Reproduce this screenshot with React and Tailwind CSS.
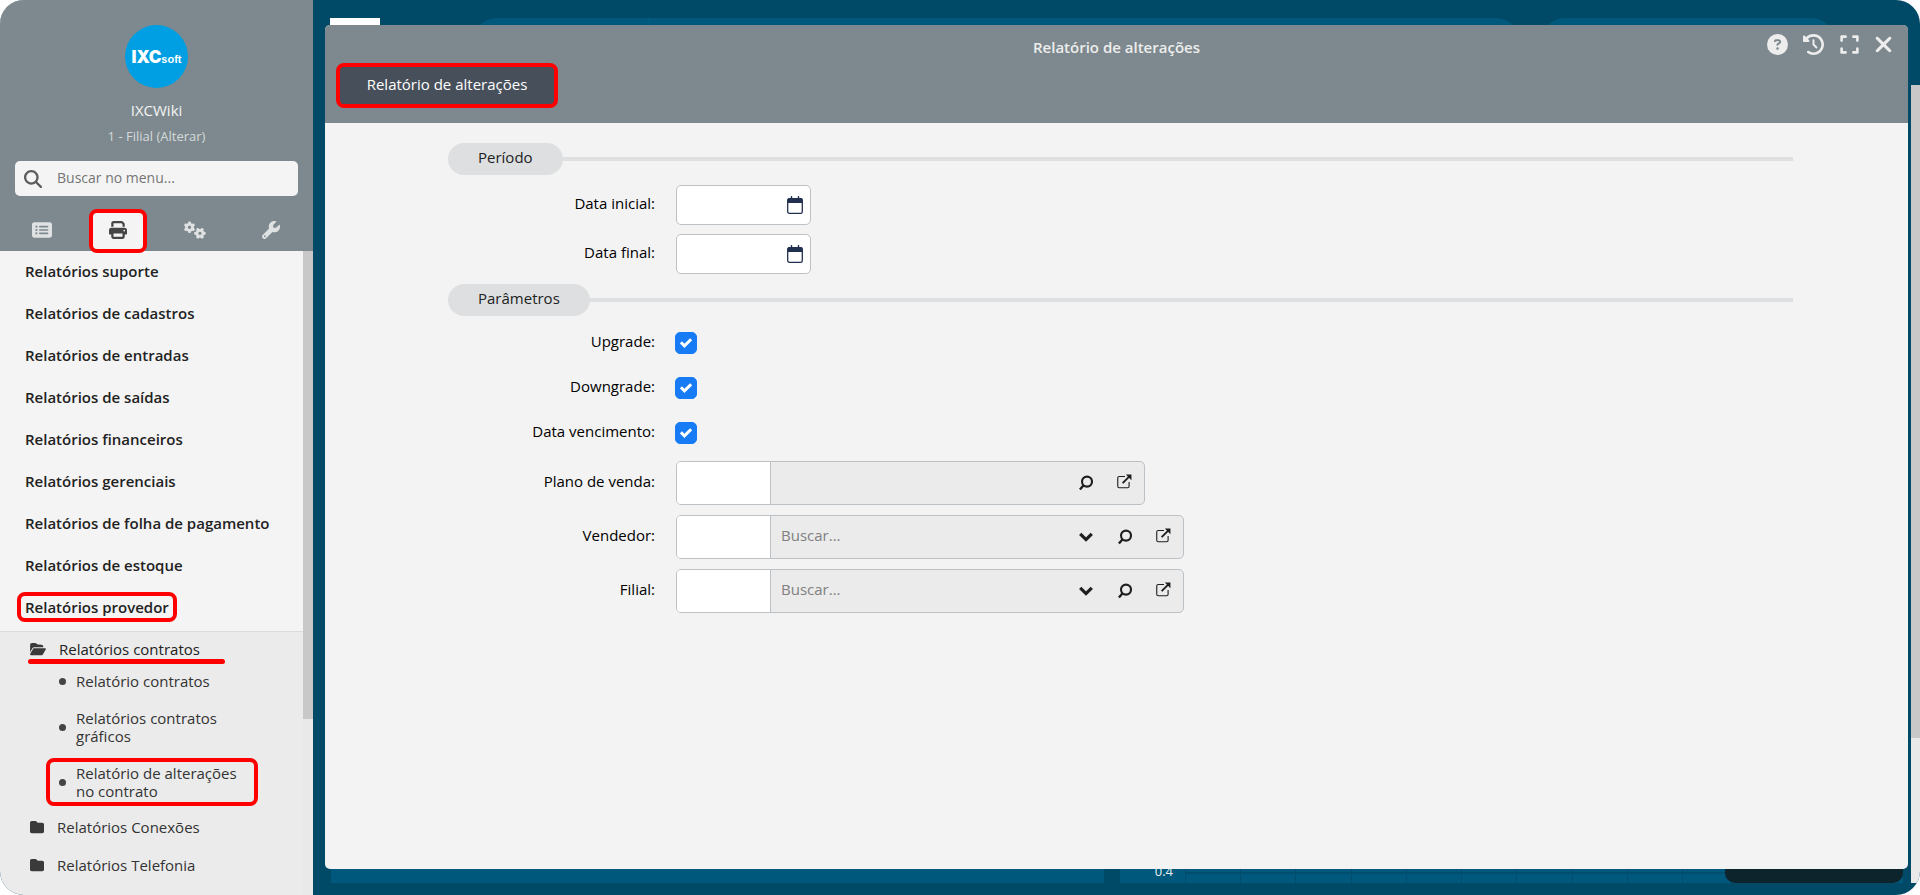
import { useState } from 'react';
import {
  FaCircleQuestion,
  FaClockRotateLeft,
  FaExpand,
  FaFolder,
  FaFolderOpen,
  FaGears,
  FaMagnifyingGlass,
  FaPrint,
  FaRectangleList,
  FaWrench,
  FaXmark,
} from 'react-icons/fa6';

const MENU_ITEMS = [
  'Relatórios suporte',
  'Relatórios de cadastros',
  'Relatórios de entradas',
  'Relatórios de saídas',
  'Relatórios financeiros',
  'Relatórios gerenciais',
  'Relatórios de folha de pagamento',
  'Relatórios de estoque',
  'Relatórios provedor',
];

const TABS = [
  { id: 'cadastros', label: 'Cadastros', icon: FaRectangleList },
  { id: 'relatorios', label: 'Relatórios', icon: FaPrint },
  { id: 'configuracoes', label: 'Configurações', icon: FaGears },
  { id: 'ferramentas', label: 'Ferramentas', icon: FaWrench },
];

const CalendarIcon = () => (
  <svg className="w-4 h-[18px]" viewBox="0 0 16 18" fill="none" aria-hidden="true">
    <path d="M4.5 0.6v3M11.5 0.6v3" stroke="#22304f" strokeWidth="1.4" strokeLinecap="round" />
    <rect x="0.7" y="2.7" width="14.6" height="14.6" rx="1.6" stroke="#22304f" strokeWidth="1.3" />
    <path d="M0.5 3.8C0.5 2.9 1.2 2.2 2 2.2h12c0.9 0 1.5 0.7 1.5 1.6V7h-15z" fill="#22304f" />
  </svg>
);

const ExternalIcon = () => (
  <svg className="w-[15px] h-[15px]" viewBox="0 0 16 16" fill="none" aria-hidden="true">
    <path d="M8.5 2.6H2.4C1.5 2.6 0.8 3.3 0.8 4.2v8.9c0 0.9 0.7 1.6 1.6 1.6h8.9c0.9 0 1.6-0.7 1.6-1.6V8.5" stroke="#1f1f1f" strokeWidth="1.2" />
    <path d="M6 9.8L13 2.8" stroke="#1f1f1f" strokeWidth="2" />
    <path d="M9.4 0.6h6v6z" fill="#1f1f1f" />
  </svg>
);

const Sidebar = () => {
  const [activeTab, setActiveTab] = useState('relatorios');

  return (
    <aside className="w-[313px] shrink-0 flex flex-col bg-[#ebebeb]">
      <div className="h-[251px] flex flex-col items-center bg-[#7d898e] pt-[25px]">
        <div className="w-[63px] h-[63px] rounded-full bg-[#009fe3] text-white flex items-baseline justify-center pt-5 leading-6">
          <span className="font-['Inter',sans-serif] font-black text-[17px]">IXC</span>
          <span className="font-['Liberation_Sans',sans-serif] font-bold text-[11px]">soft</span>
        </div>
        <p className="mt-3 text-[15px] leading-5 font-medium text-[#f4f4f4]">IXCWiki</p>
        <a href="#filial" className="mt-1.5 text-[13px] leading-5 text-[#d5d9db]">1 - Filial (Alterar)</a>
        <label className="mt-[15px] w-[283px] h-[35px] flex items-center rounded-[5px] bg-[#f4f4f4]">
          <FaMagnifyingGlass className="ml-[9px] mr-[15px] w-[18px] h-[18px] text-[#5c5c5c]" />
          <input
            type="text"
            aria-label="Buscar no menu"
            placeholder="Buscar no menu..."
            className="flex-1 min-w-0 pb-0.5 bg-transparent text-sm placeholder:text-[#757575] outline-none"
          />
        </label>
        <div className="mt-[13px] w-full px-1 flex-1 grid grid-cols-4">
          {TABS.map(({ id, label, icon: Icon }) => (
            <button
              key={id}
              aria-label={label}
              onClick={() => setActiveTab(id)}
              className={`relative flex justify-center items-center pb-px ${activeTab === id ? 'text-[#454545]' : 'text-[#dfe1e2]'}`}
            >
              {activeTab === id && (
                <span className="absolute left-[9px] top-0 w-[58px] h-11 rounded-lg border-4 border-[#ff0000] bg-[#f4f4f4]" />
              )}
              <Icon className={`relative ${id === 'configuracoes' ? 'w-[22px] h-[22px]' : id === 'cadastros' ? 'w-5 h-5' : 'w-[18px] h-[18px]'}`} />
            </button>
          ))}
        </div>
      </div>

      <div className="flex-1 flex">
        <nav className="flex-1 min-w-0">
          <ul className="bg-[#f4f4f4] border-b border-[#dadcde] pb-0.5 text-[15px] leading-5 font-semibold text-[#222]">
            {MENU_ITEMS.map((item) => (
              <li key={item} className="h-[42px] pl-[25px] pb-0.5 flex items-center">
                <a href="#menu" className="relative">
                  {item}
                  {item === 'Relatórios provedor' && (
                    <span className="absolute -left-2 -inset-y-[5px] w-[160px] rounded-lg border-4 border-[#ff0000]" />
                  )}
                </a>
              </li>
            ))}
          </ul>

          <div className="pt-[7px] text-[15px] text-[#333]">
            <a href="#contratos" className="relative flex items-center pl-[30px] leading-5 font-medium text-[#222]">
              <FaFolderOpen className="w-4 h-3.5 mr-[13px] text-[#3a3a3a]" />
              Relatórios contratos
              <span className="absolute left-7 top-5 w-[197px] h-[5px] rounded-full bg-[#ff0000]" />
            </a>
            <ul className="mt-[13px] flex flex-col gap-[19px] leading-[18px]">
              <li className="flex items-center pl-[59px]">
                <span className="w-[7px] h-[7px] mr-2.5 rounded-full bg-[#444]" />
                <a href="#relatorio-contratos">Relatório contratos</a>
              </li>
              <li className="flex items-center pl-[59px]">
                <span className="w-[7px] h-[7px] mr-2.5 rounded-full bg-[#444]" />
                <a href="#contratos-graficos">Relatórios contratos<br />gráficos</a>
              </li>
              <li className="relative flex items-center pl-[59px]">
                <span className="w-[7px] h-[7px] mr-2.5 rounded-full bg-[#444]" />
                <a href="#alteracoes">Relatório de alterações<br />no contrato</a>
                <span className="absolute left-[46px] -inset-y-1.5 w-[212px] rounded-lg border-4 border-[#ff0000]" />
              </li>
            </ul>
            <ul className="mt-[17px] flex flex-col gap-[18px] leading-5">
              <li>
                <a href="#conexoes" className="flex items-center pl-[30px]">
                  <FaFolder className="w-3.5 h-3.5 mr-[13px] text-[#3a3a3a]" />
                  Relatórios Conexões
                </a>
              </li>
              <li>
                <a href="#telefonia" className="flex items-center pl-[30px]">
                  <FaFolder className="w-3.5 h-3.5 mr-[13px] text-[#3a3a3a]" />
                  Relatórios Telefonia
                </a>
              </li>
            </ul>
          </div>
        </nav>
        <div className="w-2.5 bg-[#e9e9e9]">
          <div className="h-[468px] bg-[#c8c8c8]" />
        </div>
      </div>
    </aside>
  );
};

const Section = ({ title, children }) => (
  <section>
    <div className="flex items-center">
      <h2 className="h-8 px-[30px] rounded-full bg-[#dddfe1] text-[15px] leading-[29px] font-medium text-[#222]">{title}</h2>
      <div className="flex-1 h-1 bg-[#dddfe1]" />
    </div>
    {children}
  </section>
);

const Row = ({ id, label, children }) => (
  <div className="flex items-center gap-[21px]">
    <label htmlFor={id} className="w-[207px] shrink-0 pb-1 text-right text-[15px] leading-[18px] text-black">{label}</label>
    {children}
  </div>
);

const DateField = ({ id, label }) => (
  <Row id={id} label={label}>
    <div className="w-[135px] h-10 flex items-center rounded-[5px] border border-[#bcc1c6] bg-white">
      <input id={id} type="text" className="flex-1 min-w-0 px-2 text-sm bg-transparent outline-none" />
      <button aria-label={`Abrir calendário ${label}`} className="pr-[7px]">
        <CalendarIcon />
      </button>
    </div>
  </Row>
);

const CheckField = ({ id, label }) => (
  <Row id={id} label={label}>
    <span className="grid -ml-px">
      <input
        id={id}
        type="checkbox"
        defaultChecked
        className="peer col-start-1 row-start-1 appearance-none w-[22px] h-[22px] rounded-[5px] border border-[#bcc1c6] bg-white checked:border-[#167bf5] checked:bg-[#167bf5]"
      />
      <svg className="hidden peer-checked:block col-start-1 row-start-1 place-self-center w-3 h-3 pointer-events-none" viewBox="0 0 12 12" fill="none" aria-hidden="true">
        <path d="M0.9 5.4l3.5 3.5L11.1 2.2" stroke="#fff" strokeWidth="3" />
      </svg>
    </span>
  </Row>
);

const LookupField = ({ id, label, searchable }) => (
  <Row id={id} label={label}>
    <div className={`h-11 flex rounded-[5px] border border-[#bcc1c6] bg-[#ebebeb] overflow-hidden ${searchable ? 'w-[508px]' : 'w-[469px]'}`}>
      <input id={id} type="text" className="w-[94px] px-2 text-sm bg-white border-r border-[#bcc1c6] outline-none" />
      <input
        type="text"
        aria-label={`${label} descrição`}
        placeholder={searchable ? 'Buscar...' : ''}
        className="flex-1 min-w-0 px-2.5 pb-1 text-[15px] bg-transparent placeholder:text-[#808080] outline-none"
      />
      {searchable && (
        <button aria-label="Listar" className="w-[39px] flex items-center justify-center text-[#1f1f1f]">
          <svg className="w-3.5 h-2.5" viewBox="0 0 14 10" fill="none" stroke="currentColor" aria-hidden="true">
            <path d="M1.2 1.8L7 7.6l5.8-5.8" strokeWidth="3.2" />
          </svg>
        </button>
      )}
      <button aria-label="Pesquisar" className="w-[39px] flex items-center justify-center text-[#1f1f1f]">
        <svg className="w-3.5 h-4" viewBox="0 0 14 16" fill="none" stroke="currentColor" aria-hidden="true">
          <circle cx="8" cy="6.6" r="5" strokeWidth="2.1" />
          <path d="M4.4 10.4L0.9 14.6" strokeWidth="2.3" />
        </svg>
      </button>
      <button aria-label="Abrir cadastro" className="w-[39px] flex items-center justify-center pb-1">
        <ExternalIcon />
      </button>
    </div>
  </Row>
);

// Home screen that stays visible around the edges of the report window
const Dashboard = () => (
  <div className="flex-1 min-w-0 flex flex-col justify-between pt-[18px] pb-3 pl-[17px] pr-2">
    <div className="flex">
      <div className="w-[50px] h-[50px] bg-white" />
      <div className="ml-[92px] flex-1 h-[50px] rounded-full bg-[#00587c]">
        <div className="ml-[177px] w-px h-full bg-[#006289]" />
      </div>
      <div className="ml-[19px] mr-[67px] w-[296px] h-[50px] rounded-full bg-[#00587c]" />
    </div>
    <div className="flex gap-4 h-20 pl-px">
      <div className="flex-[773] bg-[#00587c]" />
      <div className="relative flex-[783] flex bg-[#00587c]">
        <span className="w-[65px] pr-3 pt-[58px] text-right text-[13px] leading-5 text-[#e8eef1]">0.4</span>
        <div className="flex-1 grid grid-cols-13">
          {Array.from({ length: 13 }, (_, i) => (
            <div key={i} className="pt-[69px] border-l border-[#004e6e]">
              <div className="h-0.5 bg-[#004e6e]" />
            </div>
          ))}
        </div>
        <div className="absolute right-0 bottom-0 w-[178px] h-full rounded-[10px] bg-[#0e242d]" />
      </div>
    </div>
  </div>
);

const ReportWindow = () => (
  <div role="dialog" aria-label="Relatório de alterações" className="absolute top-[25px] right-3 bottom-[26px] left-3 flex flex-col rounded-[5px] overflow-hidden bg-[#f3f3f3]">
    <header className="h-[98px] shrink-0 bg-[#7d898e] px-[11px]">
      <div className="grid grid-cols-[1fr_auto_1fr] h-[38px] items-center">
        <h1 className="col-start-2 pt-1.5 text-[15px] leading-5 font-semibold text-[#ededed]">Relatório de alterações</h1>
        <div className="flex justify-end items-center gap-[15px] pr-px text-[#ededed]">
          <button aria-label="Ajuda"><FaCircleQuestion className="w-[21px] h-[21px]" /></button>
          <button aria-label="Histórico"><FaClockRotateLeft className="w-[21px] h-[21px]" /></button>
          <button aria-label="Expandir"><FaExpand className="w-[21px] h-[21px]" /></button>
          <button aria-label="Fechar" className="-ml-1"><FaXmark className="w-[25px] h-[25px]" /></button>
        </div>
      </div>
      <button className="h-[45px] w-[222px] pb-1 rounded-lg border-4 border-[#ff0000] bg-[#47505a] text-[15px] leading-5 font-medium text-white">
        Relatório de alterações
      </button>
    </header>
    <form className="flex-1 pt-5 pl-[123px] pr-[115px] flex flex-col gap-2.5" onSubmit={(e) => e.preventDefault()}>
      <Section title="Período">
        <div className="mt-2.5 flex flex-col gap-[9px]">
          <DateField id="data-inicial" label="Data inicial:" />
          <DateField id="data-final" label="Data final:" />
        </div>
      </Section>
      <Section title="Parâmetros">
        <div className="mt-4 flex flex-col gap-[23px]">
          <CheckField id="upgrade" label="Upgrade:" />
          <CheckField id="downgrade" label="Downgrade:" />
          <CheckField id="data-vencimento" label="Data vencimento:" />
        </div>
        <div className="mt-[17px] flex flex-col gap-2.5">
          <LookupField id="plano-venda" label="Plano de venda:" />
          <LookupField id="vendedor" label="Vendedor:" searchable />
          <LookupField id="filial" label="Filial:" searchable />
        </div>
      </Section>
    </form>
  </div>
);

export default function App() {
  return (
    <div className="min-h-screen flex rounded-3xl overflow-hidden bg-[#004967] font-['Open_Sans',sans-serif]">
      <Sidebar />
      <main className="relative flex-1 min-w-0 flex">
        <Dashboard />
        <div className="w-[9px] flex flex-col pt-[85px] pb-3">
          <div className="flex-[653] bg-[#c8c8c8]" />
          <div className="flex-[145] bg-[#e9e9e9]" />
        </div>
        <ReportWindow />
      </main>
    </div>
  );
}
